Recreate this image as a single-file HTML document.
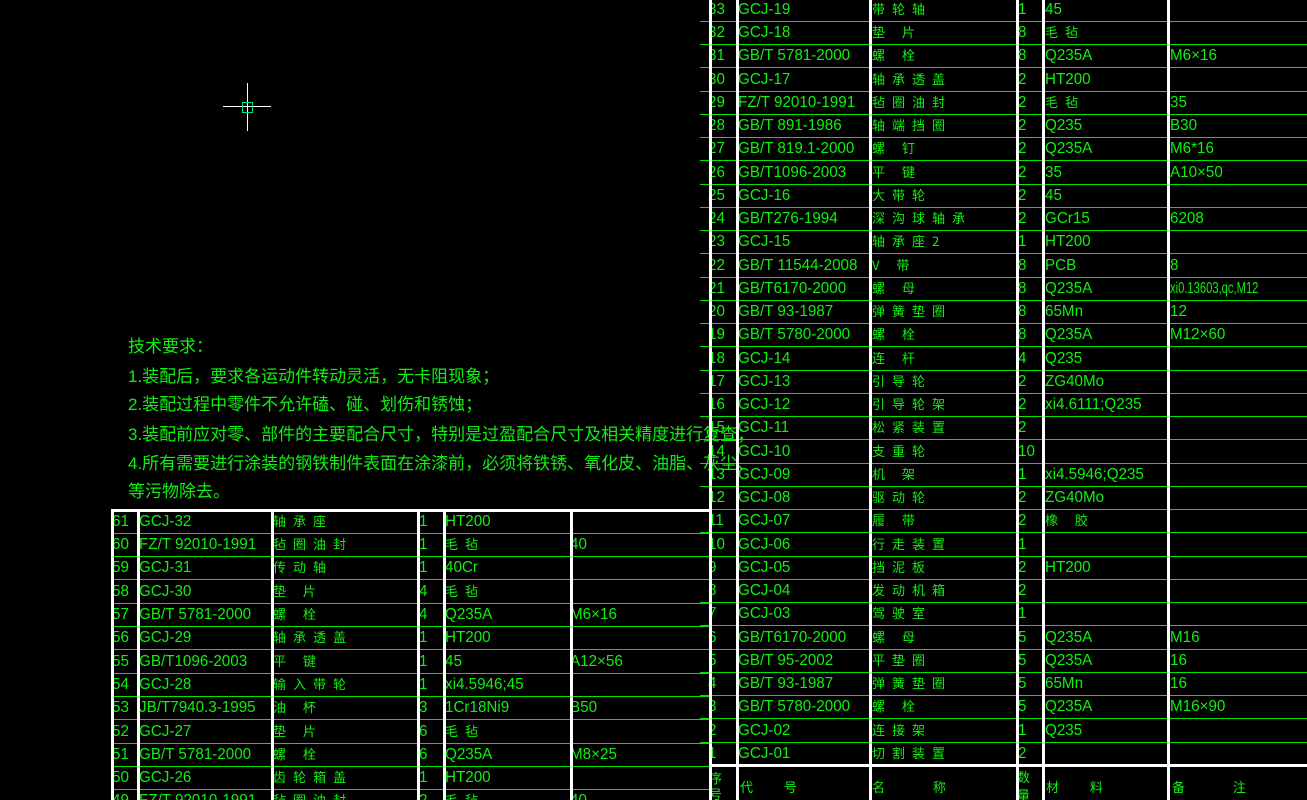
<!DOCTYPE html>
<html style="overflow:hidden;height:800px"><head><meta charset="utf-8"><style>
body{margin:0;width:1307px;height:800px;background:#000;overflow:hidden;position:relative;font-family:"Liberation Sans","Noto Sans CJK SC",sans-serif;color:#00ff00}
.r{position:absolute;height:23px;border-bottom:1px solid #00e600;}
.r span{position:absolute;top:0;line-height:23px;font-size:16px;white-space:pre;transform:scaleX(.95);transform-origin:left center;color:#10f010}
.r span.n{font-size:13px;letter-spacing:7px;transform:none;font-family:"Noto Sans CJK SC",sans-serif;line-height:19px;top:1px}
.R{left:700px;width:607px}
.R .a{left:8px}.R .b{left:38px}.R .n{left:172px}.R .d{left:318px}.R .e{left:345px}.R .f{left:470px}
.L{left:112px;width:598px}
.L .a{left:0px}.L .b{left:27px}.L .n{left:161px}.L .d{left:307px}.L .e{left:333px}.L .f{left:458px}
.v{position:absolute;width:3px;background:#fff}
.h{position:absolute;height:3px;background:#fff}
.tx{position:absolute;left:128px;font-size:17px;font-family:"Liberation Sans","Noto Sans CJK SC",sans-serif;white-space:nowrap;color:#10f010}
.hd{position:absolute;font-size:13px;font-family:"Noto Sans CJK SC",sans-serif;letter-spacing:14px;white-space:pre;color:#10f010}
</style></head><body>

<div class="tx" style="top:332px">技术要求：</div>
<div class="tx" style="top:362px">1.装配后，要求各运动件转动灵活，无卡阻现象；</div>
<div class="tx" style="top:390px">2.装配过程中零件不允许磕、碰、划伤和锈蚀；</div>
<div class="tx" style="top:420px">3.装配前应对零、部件的主要配合尺寸，特别是过盈配合尺寸及相关精度进行复查；</div>
<div class="tx" style="top:449px">4.所有需要进行涂装的钢铁制件表面在涂漆前，必须将铁锈、氧化皮、油脂、灰尘、</div>
<div class="tx" style="top:477px">等污物除去。</div>

<div style="position:absolute;left:223px;top:106px;width:48px;height:1px;background:#fff"></div>
<div style="position:absolute;left:247px;top:83px;width:1px;height:48px;background:#fff"></div>
<div style="position:absolute;left:242px;top:102px;width:9px;height:9px;border:1px solid #00e080"></div>

<div class="r R" style="top:-2px"><span class="a">33</span><span class="b">GCJ-19</span><span class="n">带轮轴</span><span class="d">1</span><span class="e">45</span></div>
<div class="r R" style="top:21px"><span class="a">32</span><span class="b">GCJ-18</span><span class="n">垫 片</span><span class="d">8</span><span class="e n" style="left:345px">毛毡</span></div>
<div class="r R" style="top:44px"><span class="a">31</span><span class="b">GB/T 5781-2000</span><span class="n">螺 栓</span><span class="d">8</span><span class="e">Q235A</span><span class="f">M6×16</span></div>
<div class="r R" style="top:68px"><span class="a">30</span><span class="b">GCJ-17</span><span class="n">轴承透盖</span><span class="d">2</span><span class="e">HT200</span></div>
<div class="r R" style="top:91px"><span class="a">29</span><span class="b">FZ/T 92010-1991</span><span class="n">毡圈油封</span><span class="d">2</span><span class="e n" style="left:345px">毛毡</span><span class="f">35</span></div>
<div class="r R" style="top:114px"><span class="a">28</span><span class="b">GB/T 891-1986</span><span class="n">轴端挡圈</span><span class="d">2</span><span class="e">Q235</span><span class="f">B30</span></div>
<div class="r R" style="top:137px"><span class="a">27</span><span class="b">GB/T 819.1-2000</span><span class="n">螺 钉</span><span class="d">2</span><span class="e">Q235A</span><span class="f">M6*16</span></div>
<div class="r R" style="top:161px"><span class="a">26</span><span class="b">GB/T1096-2003</span><span class="n">平 键</span><span class="d">2</span><span class="e">35</span><span class="f">A10×50</span></div>
<div class="r R" style="top:184px"><span class="a">25</span><span class="b">GCJ-16</span><span class="n">大带轮</span><span class="d">2</span><span class="e">45</span></div>
<div class="r R" style="top:207px"><span class="a">24</span><span class="b">GB/T276-1994</span><span class="n">深沟球轴承</span><span class="d">2</span><span class="e">GCr15</span><span class="f">6208</span></div>
<div class="r R" style="top:230px"><span class="a">23</span><span class="b">GCJ-15</span><span class="n">轴承座2</span><span class="d">1</span><span class="e">HT200</span></div>
<div class="r R" style="top:254px"><span class="a">22</span><span class="b">GB/T 11544-2008</span><span class="n">V 带</span><span class="d">8</span><span class="e">PCB</span><span class="f">8</span></div>
<div class="r R" style="top:277px"><span class="a">21</span><span class="b">GB/T6170-2000</span><span class="n">螺 母</span><span class="d">8</span><span class="e">Q235A</span><span class="f" style="transform:scaleX(.7)">xi0.13603,qc,M12</span></div>
<div class="r R" style="top:300px"><span class="a">20</span><span class="b">GB/T 93-1987</span><span class="n">弹簧垫圈</span><span class="d">8</span><span class="e">65Mn</span><span class="f">12</span></div>
<div class="r R" style="top:323px"><span class="a">19</span><span class="b">GB/T 5780-2000</span><span class="n">螺 栓</span><span class="d">8</span><span class="e">Q235A</span><span class="f">M12×60</span></div>
<div class="r R" style="top:347px"><span class="a">18</span><span class="b">GCJ-14</span><span class="n">连 杆</span><span class="d">4</span><span class="e">Q235</span></div>
<div class="r R" style="top:370px"><span class="a">17</span><span class="b">GCJ-13</span><span class="n">引导轮</span><span class="d">2</span><span class="e">ZG40Mo</span></div>
<div class="r R" style="top:393px"><span class="a">16</span><span class="b">GCJ-12</span><span class="n">引导轮架</span><span class="d">2</span><span class="e">xi4.6111;Q235</span></div>
<div class="r R" style="top:416px"><span class="a">15</span><span class="b">GCJ-11</span><span class="n">松紧装置</span><span class="d">2</span></div>
<div class="r R" style="top:440px"><span class="a">14</span><span class="b">GCJ-10</span><span class="n">支重轮</span><span class="d">10</span></div>
<div class="r R" style="top:463px"><span class="a">13</span><span class="b">GCJ-09</span><span class="n">机 架</span><span class="d">1</span><span class="e">xi4.5946;Q235</span></div>
<div class="r R" style="top:486px"><span class="a">12</span><span class="b">GCJ-08</span><span class="n">驱动轮</span><span class="d">2</span><span class="e">ZG40Mo</span></div>
<div class="r R" style="top:509px"><span class="a">11</span><span class="b">GCJ-07</span><span class="n">履 带</span><span class="d">2</span><span class="e n" style="left:345px">橡 胶</span></div>
<div class="r R" style="top:533px"><span class="a">10</span><span class="b">GCJ-06</span><span class="n">行走装置</span><span class="d">1</span></div>
<div class="r R" style="top:556px"><span class="a">9</span><span class="b">GCJ-05</span><span class="n">挡泥板</span><span class="d">2</span><span class="e">HT200</span></div>
<div class="r R" style="top:579px"><span class="a">8</span><span class="b">GCJ-04</span><span class="n">发动机箱</span><span class="d">2</span></div>
<div class="r R" style="top:602px"><span class="a">7</span><span class="b">GCJ-03</span><span class="n">驾驶室</span><span class="d">1</span></div>
<div class="r R" style="top:626px"><span class="a">6</span><span class="b">GB/T6170-2000</span><span class="n">螺 母</span><span class="d">5</span><span class="e">Q235A</span><span class="f">M16</span></div>
<div class="r R" style="top:649px"><span class="a">5</span><span class="b">GB/T 95-2002</span><span class="n">平垫圈</span><span class="d">5</span><span class="e">Q235A</span><span class="f">16</span></div>
<div class="r R" style="top:672px"><span class="a">4</span><span class="b">GB/T 93-1987</span><span class="n">弹簧垫圈</span><span class="d">5</span><span class="e">65Mn</span><span class="f">16</span></div>
<div class="r R" style="top:695px"><span class="a">3</span><span class="b">GB/T 5780-2000</span><span class="n">螺 栓</span><span class="d">5</span><span class="e">Q235A</span><span class="f">M16×90</span></div>
<div class="r R" style="top:719px"><span class="a">2</span><span class="b">GCJ-02</span><span class="n">连接架</span><span class="d">1</span><span class="e">Q235</span></div>
<div class="r R" style="top:742px;border-bottom:none"><span class="a">1</span><span class="b">GCJ-01</span><span class="n">切割装置</span><span class="d">2</span></div>

<div class="hd" style="left:709px;top:770px;letter-spacing:0;line-height:16px">序<br>号</div>
<div class="hd" style="left:740px;top:777px">代 号</div>
<div class="hd" style="left:872px;top:777px">名  称</div>
<div class="hd" style="left:1017px;top:768px;letter-spacing:0;line-height:18px">数<br>量</div>
<div class="hd" style="left:1046px;top:777px">材 料</div>
<div class="hd" style="left:1172px;top:777px">备  注</div>

<div class="r L" style="top:510px"><span class="a">61</span><span class="b">GCJ-32</span><span class="n">轴承座</span><span class="d">1</span><span class="e">HT200</span></div>
<div class="r L" style="top:533px"><span class="a">60</span><span class="b">FZ/T 92010-1991</span><span class="n">毡圈油封</span><span class="d">1</span><span class="e n" style="left:333px">毛毡</span><span class="f">40</span></div>
<div class="r L" style="top:556px"><span class="a">59</span><span class="b">GCJ-31</span><span class="n">传动轴</span><span class="d">1</span><span class="e">40Cr</span></div>
<div class="r L" style="top:580px"><span class="a">58</span><span class="b">GCJ-30</span><span class="n">垫 片</span><span class="d">4</span><span class="e n" style="left:333px">毛毡</span></div>
<div class="r L" style="top:603px"><span class="a">57</span><span class="b">GB/T 5781-2000</span><span class="n">螺 栓</span><span class="d">4</span><span class="e">Q235A</span><span class="f">M6×16</span></div>
<div class="r L" style="top:626px"><span class="a">56</span><span class="b">GCJ-29</span><span class="n">轴承透盖</span><span class="d">1</span><span class="e">HT200</span></div>
<div class="r L" style="top:650px"><span class="a">55</span><span class="b">GB/T1096-2003</span><span class="n">平 键</span><span class="d">1</span><span class="e">45</span><span class="f">A12×56</span></div>
<div class="r L" style="top:673px"><span class="a">54</span><span class="b">GCJ-28</span><span class="n">输入带轮</span><span class="d">1</span><span class="e">xi4.5946;45</span></div>
<div class="r L" style="top:696px"><span class="a">53</span><span class="b">JB/T7940.3-1995</span><span class="n">油 杯</span><span class="d">3</span><span class="e">1Cr18Ni9</span><span class="f">B50</span></div>
<div class="r L" style="top:720px"><span class="a">52</span><span class="b">GCJ-27</span><span class="n">垫 片</span><span class="d">6</span><span class="e n" style="left:333px">毛毡</span></div>
<div class="r L" style="top:743px"><span class="a">51</span><span class="b">GB/T 5781-2000</span><span class="n">螺 栓</span><span class="d">6</span><span class="e">Q235A</span><span class="f">M8×25</span></div>
<div class="r L" style="top:766px"><span class="a">50</span><span class="b">GCJ-26</span><span class="n">齿轮箱盖</span><span class="d">1</span><span class="e">HT200</span></div>
<div class="r L" style="top:789px;border-bottom:none"><span class="a">49</span><span class="b">FZ/T 92010-1991</span><span class="n">毡圈油封</span><span class="d">2</span><span class="e n" style="left:333px">毛毡</span><span class="f">40</span></div>

<div class="v" style="left:709px;top:0;height:800px"></div>
<div class="v" style="left:736px;top:0;height:800px"></div>
<div class="v" style="left:869px;top:0;height:800px"></div>
<div class="v" style="left:1016px;top:0;height:800px"></div>
<div class="v" style="left:1042px;top:0;height:800px"></div>
<div class="v" style="left:1167px;top:0;height:800px"></div>
<div class="h" style="left:709px;top:764px;width:598px"></div>

<div class="h" style="left:111px;top:509px;width:600px"></div>
<div class="v" style="left:111px;top:509px;height:291px"></div>
<div class="v" style="left:137px;top:509px;height:291px"></div>
<div class="v" style="left:271px;top:509px;height:291px"></div>
<div class="v" style="left:417px;top:509px;height:291px"></div>
<div class="v" style="left:443px;top:509px;height:291px"></div>
<div class="v" style="left:570px;top:509px;height:291px"></div>
</body></html>
